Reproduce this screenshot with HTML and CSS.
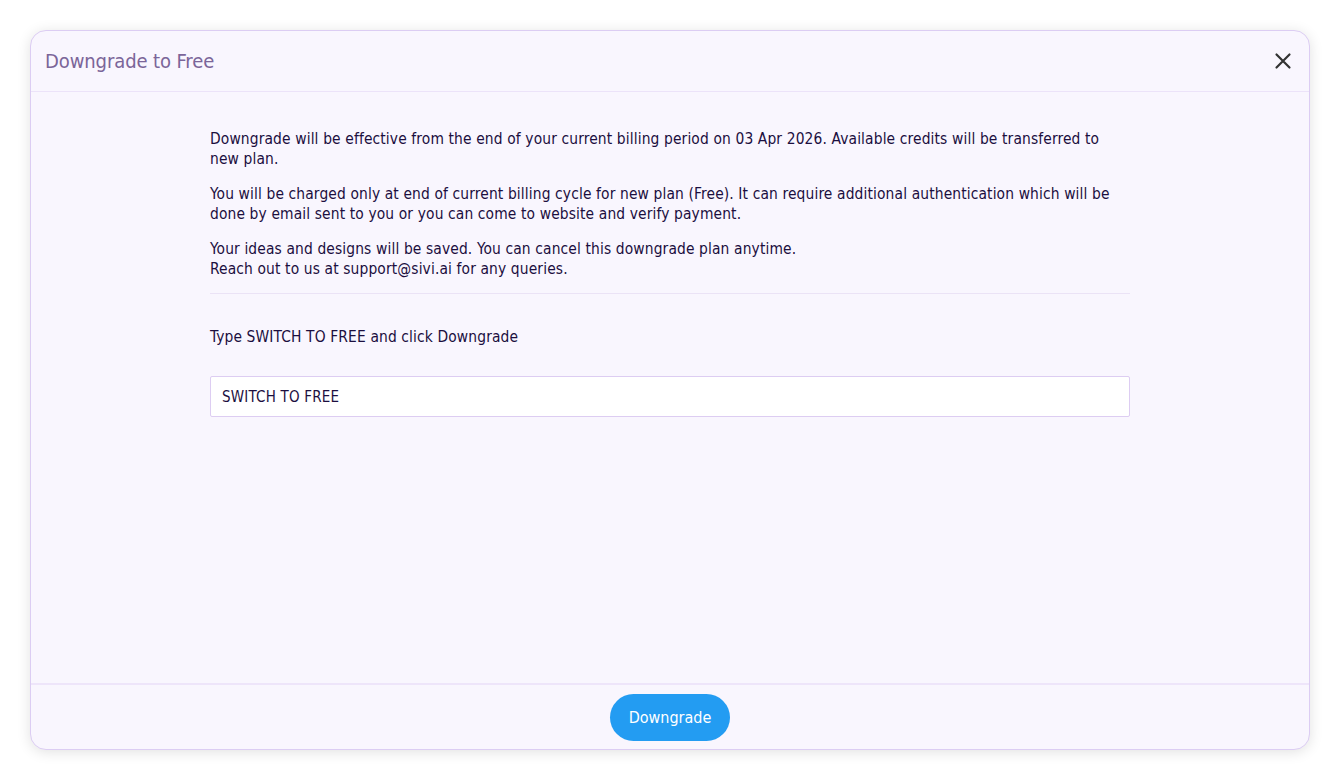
FILE: index.html
```html
<!DOCTYPE html>
<html>
<head>
<meta charset="utf-8">
<link rel="stylesheet" href="styles.css">
</head>
<body>
<div class="modal">
  <div class="modal-header">
    <h1 class="modal-title">Downgrade to Free</h1>
    <button class="close-btn" aria-label="Close">
      <svg width="18" height="18" viewBox="0 0 18 18"><path d="M2.5 2.5 L15.5 15.5 M15.5 2.5 L2.5 15.5" stroke="#333333" stroke-width="2.2" stroke-linecap="round"/></svg>
    </button>
  </div>
  <div class="modal-body">
    <div class="content">
      <p>Downgrade will be effective from the end of your current billing period on 03 Apr 2026. Available credits will be transferred to new plan.</p>
      <p>You will be charged only at end of current billing cycle for new plan (Free). It can require additional authentication which will be done by email sent to you or you can come to website and verify payment.</p>
      <p>Your ideas and designs will be saved. You can cancel this downgrade plan anytime.<br>Reach out to us at support@sivi.ai for any queries.</p>
      <hr class="divider">
      <p class="instruction">Type SWITCH TO FREE and click Downgrade</p>
      <input class="confirm-input" type="text" value="SWITCH TO FREE">
    </div>
  </div>
  <div class="modal-footer">
    <button class="primary-btn">Downgrade</button>
  </div>
</div>
</body>
</html>
```
FILE: styles.css
```css
html, body {
  margin: 0;
  padding: 0;
  background: #ffffff;
}
body {
  padding: 30px;
  font-family: "DejaVu Sans Condensed", "DejaVu Sans", sans-serif;
  font-stretch: condensed;
  color: #1c0f3f;
}
.modal {
  box-sizing: border-box;
  height: 720px;
  background: #f9f6fe;
  border: 1px solid #dccdf3;
  border-radius: 16px;
  box-shadow: 0 2px 14px rgba(0,0,0,0.12);
  display: flex;
  flex-direction: column;
  overflow: hidden;
}
.modal-header {
  height: 60px;
  display: flex;
  align-items: center;
  justify-content: space-between;
  padding: 0 14px 0 14px;
  border-bottom: 1px solid #ece3f9;
}
.modal-title {
  margin: 0;
  font-size: 20px;
  font-weight: normal;
  color: #7b6599;
  letter-spacing: -0.1px;
}
.close-btn {
  background: none;
  border: none;
  padding: 0;
  width: 24px;
  height: 24px;
  display: flex;
  align-items: center;
  justify-content: center;
  cursor: pointer;
  margin-top: -1px;
}
.modal-body {
  flex: 1;
  display: flex;
  justify-content: center;
  padding-top: 37px;
}
.content {
  width: 920px;
  font-size: 15.4px;
  letter-spacing: 0.13px;
  line-height: 20px;
}
.content p {
  margin: 0 0 15px 0;
}
.divider {
  border: none;
  border-top: 1px solid #ebe3f6;
  margin: -1px 0 0 0;
}
.content p.instruction {
  margin: 33px 0 29px 0;
}
.confirm-input {
  box-sizing: border-box;
  display: block;
  width: 100%;
  height: 41px;
  border: 1px solid #ddcdf2;
  border-radius: 2px;
  background: #ffffff;
  padding: 0 11px;
  font-family: inherit;
  font-stretch: condensed;
  font-size: 15px;
  letter-spacing: 0.2px;
  color: #1c0f3f;
  outline: none;
}
.modal-footer {
  height: 64px;
  border-top: 2px solid #eee5fa;
  display: flex;
  align-items: center;
  justify-content: center;
}
.primary-btn {
  width: 120px;
  height: 47px;
  margin-top: 1px;
  border: none;
  border-radius: 24px;
  background: #239cf2;
  color: #ffffff;
  font-family: inherit;
  font-stretch: condensed;
  font-size: 16px;
  cursor: pointer;
}
```
